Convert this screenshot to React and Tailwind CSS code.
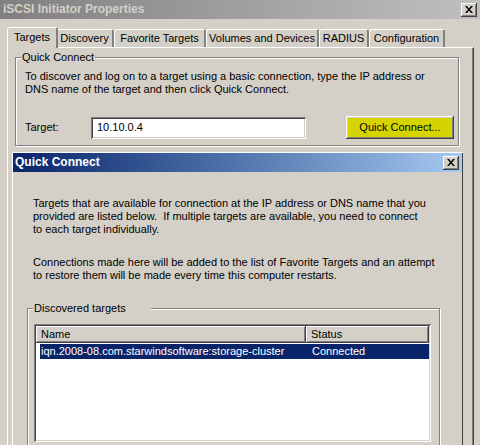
import React from "react";

const raised =
  "shadow-[inset_-1px_-1px_0_#404040,inset_1px_1px_0_#ffffff,inset_-2px_-2px_0_#808080,inset_2px_2px_0_#d4d0c8]";
const sunken =
  "shadow-[inset_1px_1px_0_#808080,inset_-1px_-1px_0_#ffffff,inset_2px_2px_0_#404040,inset_-2px_-2px_0_#d4d0c8]";
const etched = "border border-[#808080] shadow-[1px_1px_0_#ffffff,inset_1px_1px_0_#ffffff]";

function CloseBtn() {
  return (
    <div className={`w-[16px] h-[14px] bg-[#d4d0c8] ${raised} flex items-center justify-center`}>
      <svg width="8" height="7" viewBox="0 0 8 7">
        <path d="M0 0h2l2 2.5L6 0h2L5 3.5 8 7H6L4 4.5 2 7H0l3-3.5z" fill="#000" />
      </svg>
    </div>
  );
}

function Tab({ label, w, selected }) {
  return (
    <div
      className={`flex items-center justify-center rounded-t-[3px] border-t border-l border-white border-r-2 border-r-[#808080] bg-[#d4d0c8] ${
        selected ? "h-[21px] relative z-10 -mb-[1px] -mr-[2px]" : "h-[18px]"
      }`}
      style={{ width: w }}
    >
      <span className={selected ? "pb-[2px]" : ""}>{label}</span>
    </div>
  );
}

export default function App() {
  return (
    <div
      className="relative w-[480px] h-[445px] overflow-hidden bg-[#d4d0c8] text-[11px] leading-[13px] text-black"
      style={{ fontFamily: '"Liberation Sans", Arial, sans-serif' }}
    >
      {/* title bar */}
      <div className="h-[19px] flex items-center justify-between pl-[3px] pr-[3px] bg-gradient-to-r from-[#808080] to-[#c0c0c0]">
        <span className="font-bold text-[12px] text-[#d4d0c8]">iSCSI Initiator Properties</span>
        <CloseBtn />
      </div>

      {/* tabs */}
      <div className="pl-[7px] mt-[8px] flex items-end h-[20px]">
        <Tab label="Targets" w={51} selected />
        <Tab label="Discovery" w={58} />
        <Tab label="Favorite Targets" w={92} />
        <Tab label="Volumes and Devices" w={113} />
        <Tab label="RADIUS" w={50} />
        <Tab label="Configuration" w={76} />
      </div>

      {/* panel */}
      <div className="ml-[7px] w-[467px] h-[420px] border-t border-l border-white border-r border-r-[#404040] shadow-[inset_-1px_0_0_#808080] pl-[7px] pt-[9px]">
        <div className={`relative w-[444px] h-[89px] ${etched} pl-[9px] pt-[12px]`}>
          <span className="absolute left-[5px] -top-[7px] px-[1px] bg-[#d4d0c8]">Quick Connect</span>
          <p>
            To discover and log on to a target using a basic connection, type the IP address or
            <br />
            DNS name of the target and then click Quick Connect.
          </p>
          <div className="flex items-center mt-[20px]">
            <span className="w-[66px]">Target:</span>
            <div className={`w-[215px] h-[22px] bg-white ${sunken} flex items-center pl-[6px]`}>10.10.0.4</div>
            <div className={`ml-[40px] w-[108px] h-[23px] bg-[#d6d400] ${raised} flex items-center justify-center`}>
              Quick Connect...
            </div>
          </div>
        </div>
      </div>

      {/* Quick Connect dialog */}
      <div className="absolute left-[12px] top-[152px] w-[451px] h-[320px] bg-[#d4d0c8] shadow-[inset_1px_1px_0_#ffffff,inset_-1px_-1px_0_#404040] p-[1px]">
        <div className="h-[19px] flex items-center justify-between pl-[2px] pr-[3px] bg-gradient-to-r from-[#0a246a] to-[#a6caf0]">
          <span className="font-bold text-[12px] text-white">Quick Connect</span>
          <CloseBtn />
        </div>
        <div className="pl-[20px] pt-[25px]">
          <p>
            Targets that are available for connection at the IP address or DNS name that you
            <br />
            provided are listed below.&nbsp; If multiple targets are available, you need to connect
            <br />
            to each target individually.
          </p>
          <p className="mt-[20px]">
            Connections made here will be added to the list of Favorite Targets and an attempt
            <br />
            to restore them will be made every time this computer restarts.
          </p>
          <div className={`relative mt-[26px] -ml-[6px] w-[413px] h-[160px] ${etched} pl-[6px] pt-[15px]`}>
            <span className="absolute left-[5px] -top-[7px] pl-[1px] pr-[25px] bg-[#d4d0c8]">Discovered targets</span>
            <div className={`w-[397px] h-[118px] bg-white ${sunken} p-[2px]`}>
              <div className="flex h-[17px]">
                <div className={`w-[270px] ${raised} bg-[#d4d0c8] flex items-center pl-[5px]`}>Name</div>
                <div className={`w-[123px] ${raised} bg-[#d4d0c8] flex items-center pl-[5px]`}>Status</div>
              </div>
              <div className="ml-[4px] mt-[1px] h-[15px] bg-[#0a246a] text-white flex items-center">
                <span className="w-[268px] pl-[1px]">iqn.2008-08.com.starwindsoftware:storage-cluster</span>
                <span className="pl-[4px]">Connected</span>
              </div>
            </div>
          </div>
        </div>
      </div>
    </div>
  );
}
